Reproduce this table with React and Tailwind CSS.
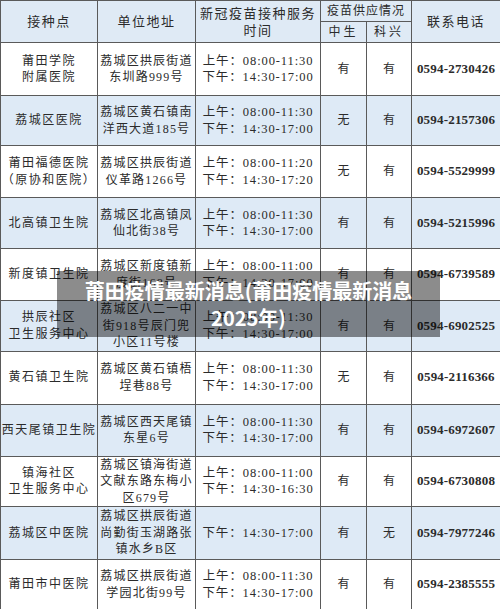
import React from 'react';

const rows = [
    { name: ['莆田学院', '附属医院'], addr: ['荔城区拱辰街道', '东圳路999号'], time: ['08:00-11:30', '14:30-17:00'], zs: '有', kx: '有', tel: '0594-2730426', h: 'h-[53px]' },
    { name: ['荔城区医院'], addr: ['荔城区黄石镇南', '洋西大道185号'], time: ['08:00-11:30', '14:30-17:00'], zs: '无', kx: '有', tel: '0594-2157306', h: 'h-[50px]', blue: true },
    { name: ['莆田福德医院', '（原协和医院）'], addr: ['荔城区拱辰街道', '仪革路1266号'], time: ['08:00-11:20', '14:30-17:20'], zs: '无', kx: '有', tel: '0594-5529999', h: 'h-[52px]' },
    { name: ['北高镇卫生院'], addr: ['荔城区北高镇凤', '仙北街38号'], time: ['08:00-11:30', '14:30-17:00'], zs: '有', kx: '有', tel: '0594-5215996', h: 'h-[51px]', blue: true },
    { name: ['新度镇卫生院'], addr: ['荔城区新度镇新', '度街168号'], time: ['08:00-11:00', '14:30-17:00'], zs: '有', kx: '有', tel: '0594-6739589', h: 'h-[52px]' },
    { name: ['拱辰社区', '卫生服务中心'], addr: ['荔城区八二一中', '街918号辰门兜', '小区11号楼'], time: ['08:00-11:30', '14:30-17:00'], zs: '有', kx: '有', tel: '0594-6902525', h: 'h-[50px]', blue: true },
    { name: ['黄石镇卫生院'], addr: ['荔城区黄石镇梧', '埕巷88号'], time: ['08:00-11:30', '14:30-17:00'], zs: '无', kx: '有', tel: '0594-2116366', h: 'h-[53px]' },
    { name: ['西天尾镇卫生院'], addr: ['荔城区西天尾镇', '东星6号'], time: ['08:00-11:30', '14:30-17:00'], zs: '有', kx: '有', tel: '0594-6972607', h: 'h-[52px]', blue: true },
    { name: ['镇海社区', '卫生服务中心'], addr: ['荔城区镇海街道', '文献东路东梅小', '区679号'], time: ['08:00-11:00', '14:30-16:30'], zs: '有', kx: '有', tel: '0594-6730808', h: 'h-[50px]' },
    { name: ['荔城区中医院'], addr: ['荔城区拱辰街道', '尚勤街玉湖路张', '镇水乡B区'], time: [null, '14:30-17:00'], zs: '有', kx: '无', tel: '0594-7977246', h: 'h-[53px]', blue: true },
    { name: ['莆田市中医院'], addr: ['荔城区拱辰街道', '学园北街99号'], time: ['08:00-11:30', '14:30-17:00'], zs: '有', kx: '有', tel: '0594-2385555', h: 'h-[50px]' },
]

const cell = 'border border-[#5a5a5a] text-center align-middle p-0'

const App = () => {
    return (
        <div className='relative w-[500px] h-[609px] overflow-hidden bg-white text-[#2b2b2b] font-["Liberation_Serif","Noto_Sans_CJK_SC",serif]'>
            <table className='w-[500px] table-fixed border-collapse'>
                <colgroup>
                    <col className='w-[97px]' />
                    <col className='w-[98px]' />
                    <col className='w-[125px]' />
                    <col className='w-[46px]' />
                    <col className='w-[45px]' />
                    <col className='w-[89px]' />
                </colgroup>
                <thead>
                    <tr className='bg-[#dfeaf5] text-[13px] tracking-[1.5px] leading-[17px]'>
                        <td rowSpan={2} className={cell}>接种点</td>
                        <td rowSpan={2} className={cell}>单位地址</td>
                        <td rowSpan={2} className={cell}>新冠疫苗接种服务<br />时间</td>
                        <td colSpan={2} className={`${cell} h-[21px] text-[12px] tracking-[1px]`}>疫苗供应情况</td>
                        <td rowSpan={2} className={cell}>联系电话</td>
                    </tr>
                    <tr className='bg-[#dfeaf5] text-[12px] tracking-[3px] leading-[17px]'>
                        <td className={`${cell} h-[21px]`}>中生</td>
                        <td className={`${cell} h-[21px]`}>科兴</td>
                    </tr>
                </thead>
                <tbody>
                    {rows.map((r, i) =>
                        <tr key={i} className={`${r.blue ? 'bg-[#deeaf6]' : 'bg-white'} text-[12px] leading-[16.5px]`}>
                            <td className={`${cell} ${r.h} tracking-[1.5px]`}>
                                {r.name.map((n, j) => <div key={j}>{n}</div>)}
                            </td>
                            <td className={`${cell} tracking-[1.2px]`}>
                                {r.addr.map((n, j) => <div key={j}>{n}</div>)}
                            </td>
                            <td className={`${cell} tracking-[0.9px] text-[12.5px]`}>
                                {r.time[0] && <div>上午：{r.time[0]}</div>}
                                <div>下午：{r.time[1]}</div>
                            </td>
                            <td className={cell}>{r.zs}</td>
                            <td className={cell}>{r.kx}</td>
                            <td className={`${cell} text-[13px] font-bold tracking-[0.2px]`}>{r.tel}</td>
                        </tr>
                    )}
                </tbody>
            </table>

            <div className='absolute left-[57px] top-[271px] w-[383px] h-[66px] bg-black/45 flex items-center justify-center px-2'>
                <p className='text-white text-[20px] leading-[27px] font-bold text-center font-["Noto_Sans_CJK_SC",sans-serif]'>
                    莆田疫情最新消息(莆田疫情最新消息<br />2025年)
                </p>
            </div>
        </div>
    );
};

export default App;
